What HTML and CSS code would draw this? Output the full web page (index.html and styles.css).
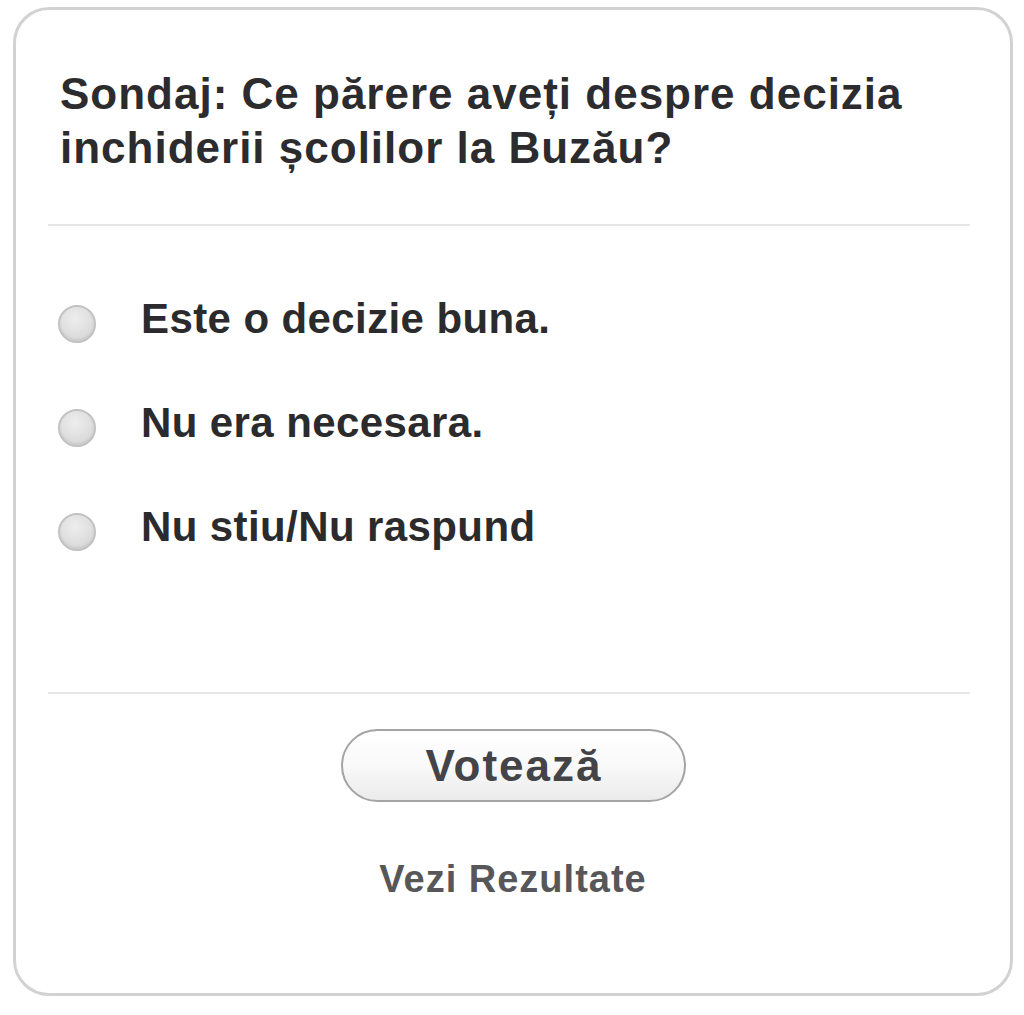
FILE: index.html
```html
<!DOCTYPE html>
<html lang="ro">
<head>
<meta charset="utf-8">
<title>Sondaj</title>
<link rel="stylesheet" href="styles.css">
</head>
<body>
<div class="poll">
  <h2 class="poll-title">Sondaj: Ce părere aveți despre decizia inchiderii școlilor la Buzău?</h2>
  <hr class="divider">
  <ul class="options">
    <li class="option"><span class="radio"></span><span class="label">Este o decizie buna.</span></li>
    <li class="option"><span class="radio"></span><span class="label">Nu era necesara.</span></li>
    <li class="option"><span class="radio"></span><span class="label">Nu stiu/Nu raspund</span></li>
  </ul>
  <hr class="divider divider-bottom">
  <div class="actions">
    <button class="vote" type="button">Votează</button>
    <a class="results" href="#">Vezi Rezultate</a>
  </div>
</div>
</body>
</html>
```
FILE: styles.css
```css
html, body {
  margin: 0;
  padding: 0;
  background: #ffffff;
}

body {
  font-family: "Liberation Sans", Arial, sans-serif;
}

.poll {
  box-sizing: border-box;
  width: 1000px;
  height: 989px;
  margin: 7px 0 0 13px;
  border: 3px solid #d2d2d2;
  border-radius: 36px;
  background: #ffffff;
  padding: 57px 40px 0 32px;
}

.poll-title {
  margin: 0;
  padding-left: 12px;
  font-size: 44px;
  line-height: 54px;
  font-weight: bold;
  letter-spacing: 1px;
  color: #2c2c2e;
}

.divider {
  margin: 49px 0 0 0;
  border: 0;
  height: 2px;
  background: #e6e6e6;
}

.divider-bottom {
  margin-top: 113px;
}

.options {
  list-style: none;
  margin: 41px 0 0 0;
  padding: 0;
}

.option {
  display: flex;
  align-items: center;
  height: 104px;
  padding-left: 10px;
}

.radio {
  box-sizing: border-box;
  flex: none;
  width: 38px;
  height: 38px;
  margin-top: 10px;
  border-radius: 50%;
  border: 2px solid #c2c2c2;
  background: radial-gradient(circle at 45% 35%, #eeeeee 0%, #dedede 55%, #d2d2d2 100%);
  box-shadow: inset 0 -2px 2px rgba(0, 0, 0, 0.06);
}

.label {
  margin-left: 45px;
  font-size: 42px;
  line-height: 50px;
  font-weight: bold;
  letter-spacing: 0.4px;
  color: #2b2b2d;
}

.actions {
  display: flex;
  flex-direction: column;
  align-items: center;
  padding-left: 8px;
}

.vote {
  box-sizing: border-box;
  margin-top: 35px;
  width: 345px;
  height: 73px;
  border: 2px solid #a4a4a4;
  border-radius: 37px;
  background: linear-gradient(#ffffff 0%, #f9f9f9 50%, #ebebeb 100%);
  font-family: "Liberation Sans", Arial, sans-serif;
  font-size: 44px;
  font-weight: bold;
  letter-spacing: 2px;
  color: #444448;
  padding: 0 0 0 2px;
}

.results {
  margin-top: 55px;
  font-size: 38px;
  line-height: 44px;
  font-weight: bold;
  letter-spacing: 1px;
  color: #57575a;
  text-decoration: none;
}
```
